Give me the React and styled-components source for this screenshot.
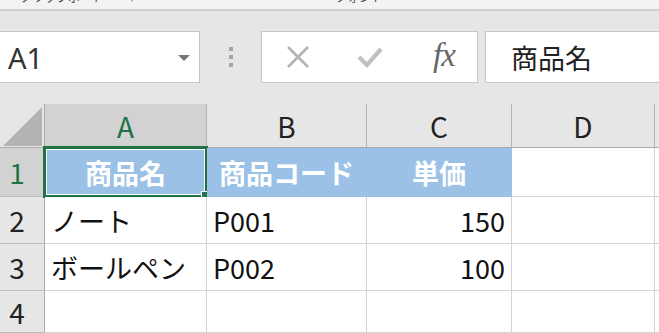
import React from 'react';
import styled, { createGlobalStyle } from 'styled-components';

const GlobalStyle = createGlobalStyle`
  html, body {
    margin: 0;
    padding: 0;
    overflow: hidden;
    background: #e6e6e6;
  }
`;

const JP = `"Noto Sans CJK JP", "Noto Sans", sans-serif`;
const GREEN = '#217346';

const Page = styled.div`
  width: 659px;
  height: 333px;
  display: flex;
  flex-direction: column;
  background: #e6e6e6;
  overflow: hidden;
`;

const RibbonEdge = styled.div`
  height: 9px;
  flex: none;
  background: #f3f3f3;
  border-bottom: 2px solid #cfcfcf;
  overflow: hidden;
  display: flex;
  padding-left: 20px;
`;

const RibbonLabel = styled.span`
  font-family: ${JP};
  font-size: 12px;
  line-height: 12px;
  color: #444;
  margin-top: -9px;
  width: ${(p) => p.$w}px;
  flex: none;
  white-space: nowrap;
`;

const Toolbar = styled.div`
  display: flex;
  align-items: center;
  height: 52px;
  margin-top: 20px;
  flex: none;
`;

const NameBox = styled.div`
  box-sizing: border-box;
  width: 201px;
  height: 52px;
  margin-left: -1px;
  background: #fff;
  border: 1px solid #c6c6c6;
  display: flex;
  align-items: center;
  justify-content: space-between;
  padding: 0 9px 0 8px;
  font-family: "Noto Sans", "Open Sans", sans-serif;
  font-size: 29px;
  color: #333;
`;

const Caret = styled.span`
  width: 0;
  height: 0;
  border-left: 6px solid transparent;
  border-right: 6px solid transparent;
  border-top: 6px solid #777;
  margin-top: 1px;
`;

const Grip = styled.div`
  width: 60px;
  display: flex;
  flex-direction: column;
  align-items: center;
  gap: 4px;
  margin-left: 1px;
`;

const Dot = styled.span`
  width: 4px;
  height: 4px;
  background: #a6a6a6;
`;

const ButtonBox = styled.div`
  box-sizing: border-box;
  width: 217px;
  height: 52px;
  background: #fff;
  border: 1px solid #c6c6c6;
  display: grid;
  grid-template-columns: 72px 72px 72px;
  align-items: center;
  justify-items: center;
`;

const Fx = styled.span`
  font-family: "Liberation Serif", serif;
  font-style: italic;
  font-size: 33px;
  color: #666;
  letter-spacing: -1px;
  margin-top: -4px;
  margin-left: 4px;
`;

const FormulaInput = styled.div`
  box-sizing: border-box;
  flex: 1;
  height: 52px;
  margin-left: 7px;
  margin-right: -2px;
  background: #fff;
  border: 1px solid #c6c6c6;
  display: flex;
  align-items: center;
  padding-left: 25px;
  font-family: ${JP};
  font-size: 27px;
  color: #222;
`;

const Sheet = styled.div`
  margin-top: 21px;
  flex: 1;
  display: grid;
  grid-template-columns: 45px 162px 160px 145px 143px 1fr;
  grid-template-rows: 44px 49px 47px 47px 1fr;
  font-family: ${JP};
`;

const Corner = styled.div`
  box-sizing: border-box;
  background: #e6e6e6;
  border-right: 1px solid #ababab;
  border-bottom: 1px solid #ababab;
  display: flex;
  align-items: flex-end;
  justify-content: flex-end;
  padding: 0 2px 1px 0;
`;

const Triangle = styled.div`
  width: 39px;
  height: 39px;
  background: #b4b4b4;
  clip-path: polygon(100% 0, 100% 100%, 0 100%);
`;

const ColHead = styled.div`
  box-sizing: border-box;
  background: ${(p) => (p.$selected ? '#d2d2d2' : '#e6e6e6')};
  border-right: 1px solid #b4b4b4;
  border-bottom: 1px solid #ababab;
  display: flex;
  align-items: center;
  justify-content: center;
  font-size: 28px;
  color: ${(p) => (p.$selected ? GREEN : '#222')};
`;

const RowHead = styled.div`
  box-sizing: border-box;
  background: ${(p) => (p.$selected ? '#d2d2d2' : '#e6e6e6')};
  border-right: 1px solid #ababab;
  border-bottom: 1px solid #bdbdbd;
  display: flex;
  align-items: center;
  justify-content: center;
  padding-right: 10px;
  font-size: 28px;
  color: ${(p) => (p.$selected ? GREEN : '#222')};
`;

const Cell = styled.div`
  box-sizing: border-box;
  position: relative;
  background: ${(p) => (p.$title ? '#9bc2e6' : '#fff')};
  border-right: 1px solid ${(p) => (p.$title ? '#9bc2e6' : '#d4d4d4')};
  border-bottom: 1px solid ${(p) => (p.$title ? '#9bc2e6' : '#d4d4d4')};
  display: flex;
  align-items: center;
  justify-content: ${(p) => (p.$title ? 'center' : p.$num ? 'flex-end' : 'flex-start')};
  padding: 0 6px;
  font-size: 27px;
  font-weight: ${(p) => (p.$title ? 700 : 400)};
  color: ${(p) => (p.$title ? '#fff' : '#111')};
  white-space: nowrap;
`;

const Selection = styled.div`
  position: absolute;
  left: -2px;
  top: -2px;
  right: -2px;
  bottom: -2px;
  border: 3px solid ${GREEN};
  box-shadow: inset 0 0 0 1px #fff;
  pointer-events: none;
`;

const FillHandle = styled.div`
  position: absolute;
  right: -5px;
  bottom: -5px;
  width: 8px;
  height: 8px;
  background: ${GREEN};
  box-shadow: 0 0 0 1px #fff;
`;

const CrossIcon = () => (
  <svg width="24" height="22" viewBox="0 0 24 22">
    <path d="M2 1 L22 21 M22 1 L2 21" stroke="#b3b3b3" strokeWidth="2.6" fill="none" />
  </svg>
);

const CheckIcon = () => (
  <svg width="26" height="22" viewBox="0 0 26 22">
    <path d="M2 11 L10 19 L24 3" stroke="#c0c0c0" strokeWidth="4.2" fill="none" />
  </svg>
);

const cols = ['A', 'B', 'C', 'D', ''];

const rows = [
  { n: 1, cells: [{ v: '商品名', title: true }, { v: '商品コード', title: true }, { v: '単価', title: true }, {}, {}] },
  { n: 2, cells: [{ v: 'ノート' }, { v: 'P001' }, { v: '150', num: true }, {}, {}] },
  { n: 3, cells: [{ v: 'ボールペン' }, { v: 'P002' }, { v: '100', num: true }, {}, {}] },
  { n: 4, cells: [{}, {}, {}, {}, {}] },
];

export default function App() {
  return (
    <Page>
      <GlobalStyle />
      <RibbonEdge>
        <RibbonLabel $w={315}>クリップボード　　 ⌐</RibbonLabel>
        <RibbonLabel $w={100}>フォント</RibbonLabel>
      </RibbonEdge>
      <Toolbar>
        <NameBox>
          <span>A1</span>
          <Caret />
        </NameBox>
        <Grip>
          <Dot />
          <Dot />
          <Dot />
        </Grip>
        <ButtonBox>
          <CrossIcon />
          <CheckIcon />
          <Fx>fx</Fx>
        </ButtonBox>
        <FormulaInput>商品名</FormulaInput>
      </Toolbar>
      <Sheet>
        <Corner>
          <Triangle />
        </Corner>
        {cols.map((c, i) => (
          <ColHead key={i} $selected={c === 'A'}>
            {c}
          </ColHead>
        ))}
        {rows.map((r) => (
          <React.Fragment key={r.n}>
            <RowHead $selected={r.n === 1}>{r.n}</RowHead>
            {r.cells.map((cell, i) => (
              <Cell key={i} $title={cell.title} $num={cell.num}>
                {cell.v}
                {r.n === 1 && i === 0 && (
                  <Selection>
                    <FillHandle />
                  </Selection>
                )}
              </Cell>
            ))}
          </React.Fragment>
        ))}
      </Sheet>
    </Page>
  );
}
